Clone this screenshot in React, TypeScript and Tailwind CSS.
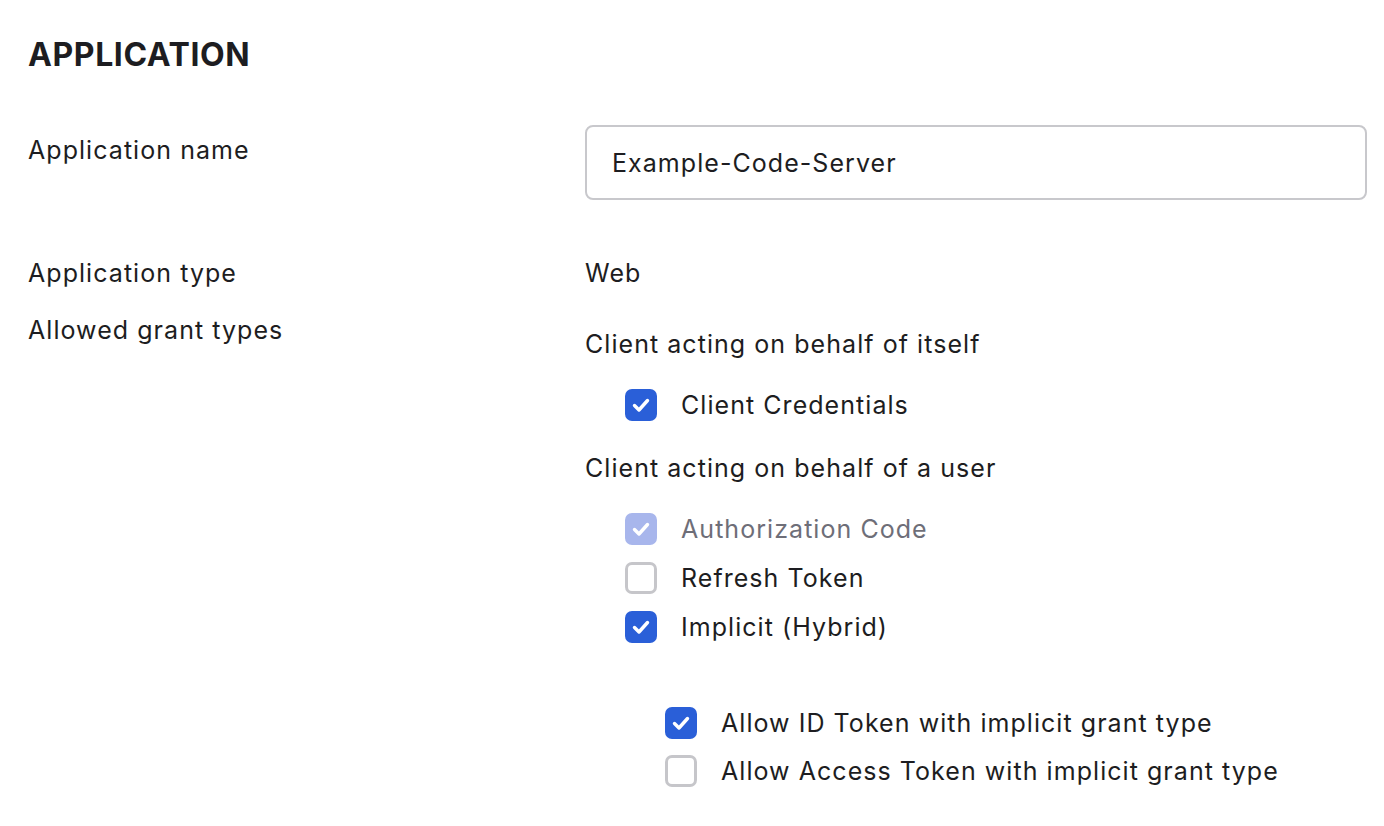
import React from "react";

type BoxState = "checked" | "disabled" | "unchecked";

function Box({ state }: { state: BoxState }) {
  if (state === "unchecked") {
    return <span className="w-[32px] h-[32px] rounded-[7px] border-[3px] border-[#c6c6ca] bg-white shrink-0" />;
  }
  const bg = state === "checked" ? "bg-[#2a5fd8]" : "bg-[#a8b6ec]";
  return (
    <span className={`w-[32px] h-[32px] rounded-[7px] ${bg} flex items-center justify-center shrink-0`}>
      <svg width="22" height="22" viewBox="0 0 22 22" fill="none">
        <path d="M4.5 11.5l4.5 4.5 8.5-9.5" stroke="white" strokeWidth="3.4" strokeLinecap="round" strokeLinejoin="round" />
      </svg>
    </span>
  );
}

function CheckRow({ state, label, indent = "ml-[40px]" }: { state: BoxState; label: string; indent?: string }) {
  return (
    <div className={`flex items-center gap-[24px] h-[36px] ${indent}`}>
      <Box state={state} />
      <span className={state === "disabled" ? "text-[#6e6e78]" : "text-[#1d1d21]"}>{label}</span>
    </div>
  );
}

export default function App() {
  return (
    <div
      className="w-[1384px] h-[826px] bg-white text-[#1d1d21] text-[25px] leading-[36px] tracking-[1.05px] pl-[28px] pr-[17px] pt-[35px]"
      style={{ fontFamily: "Inter, 'Noto Sans', sans-serif" }}
    >
      <h1 className="text-[32px] leading-[40px] font-bold tracking-[0.6px]">APPLICATION</h1>

      <div className="flex mt-[50px]">
        <div className="w-[557px] mt-[7px] shrink-0">Application name</div>
        <div className="flex-1 h-[75px] border-2 border-[#c8c8cc] rounded-[8px] flex items-center pl-[25px]">
          Example-Code-Server
        </div>
      </div>

      <div className="flex mt-[55px]">
        <div className="w-[557px] shrink-0">Application type</div>
        <div>Web</div>
      </div>

      <div className="flex mt-[21px]">
        <div className="w-[557px] shrink-0">Allowed grant types</div>
        <div className="mt-[14px] flex flex-col">
          <div>Client acting on behalf of itself</div>
          <div className="mt-[25px]">
            <CheckRow state="checked" label="Client Credentials" />
          </div>
          <div className="mt-[27px]">Client acting on behalf of a user</div>
          <div className="mt-[25px] flex flex-col gap-[13px]">
            <CheckRow state="disabled" label="Authorization Code" />
            <CheckRow state="unchecked" label="Refresh Token" />
            <CheckRow state="checked" label="Implicit (Hybrid)" />
          </div>
          <div className="mt-[60px] flex flex-col gap-[12px]">
            <CheckRow state="checked" label="Allow ID Token with implicit grant type" indent="ml-[80px]" />
            <CheckRow state="unchecked" label="Allow Access Token with implicit grant type" indent="ml-[80px]" />
          </div>
        </div>
      </div>
    </div>
  );
}
